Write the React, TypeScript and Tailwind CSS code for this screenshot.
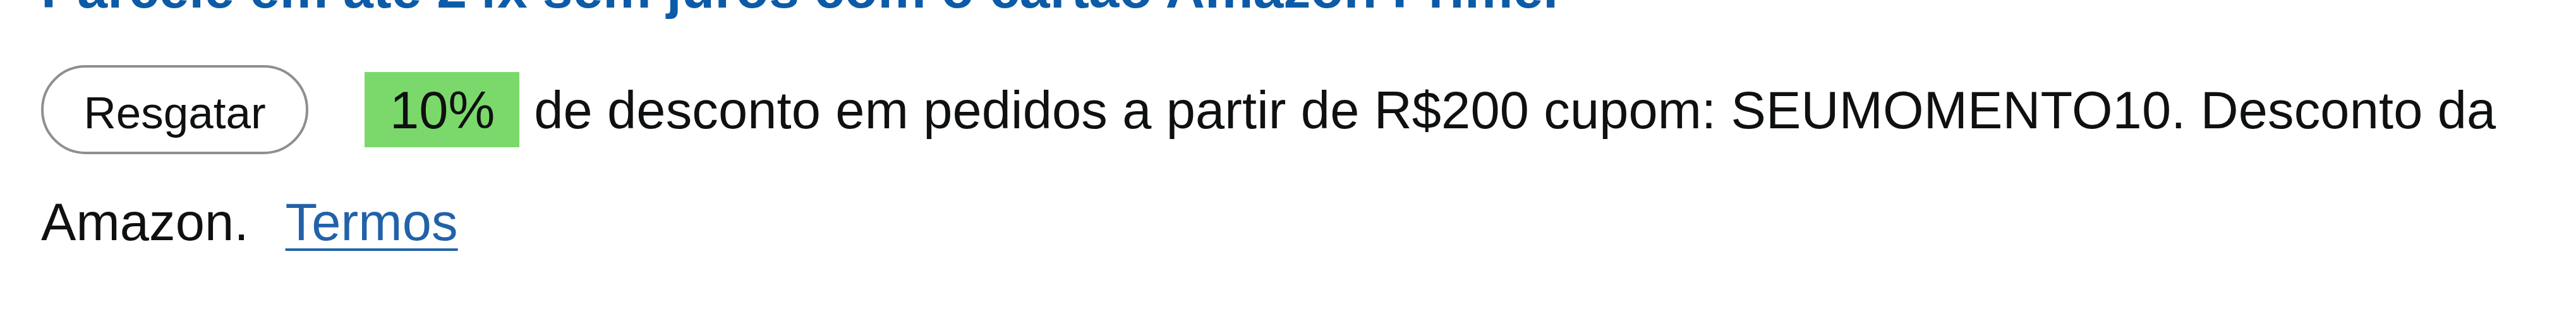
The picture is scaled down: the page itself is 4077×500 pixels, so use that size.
import React from "react";

export default function App() {
  return (
    <div
      className="w-[4077px] h-[500px] overflow-hidden bg-white px-[65px] text-[#0f1111]"
      style={{ fontFamily: '"Liberation Sans", Arial, sans-serif' }}
    >
      <div className="-mt-[106px] text-[86px] leading-[177px] font-bold text-[#0b5ba8] whitespace-nowrap">
        Parcele em até 24x sem juros com o cartão Amazon Prime.
      </div>
      <p className="mt-[15px] text-[83px] leading-[177px] tracking-[0.15px]">
        <button className="inline-block w-[423px] h-[141px] rounded-full border-[4px] border-[#8d9090] bg-white pt-[10px] text-center text-[71px] leading-[123px] tracking-normal text-[#0f1111] align-baseline">
          Resgatar
        </button>
        <span className="ml-[89px] inline-block w-[245px] h-[119px] bg-[#7bd96b] pl-[40px] pt-[2px] leading-[117px] align-baseline">
          10%
        </span>{" "}
        de desconto em pedidos a partir de R$200 cupom: SEUMOMENTO10. Desconto da Amazon.
        <a
          href="#"
          className="ml-[58px] text-[#2162a8] underline decoration-[4px] underline-offset-[13px]"
        >
          Termos
        </a>
      </p>
    </div>
  );
}
